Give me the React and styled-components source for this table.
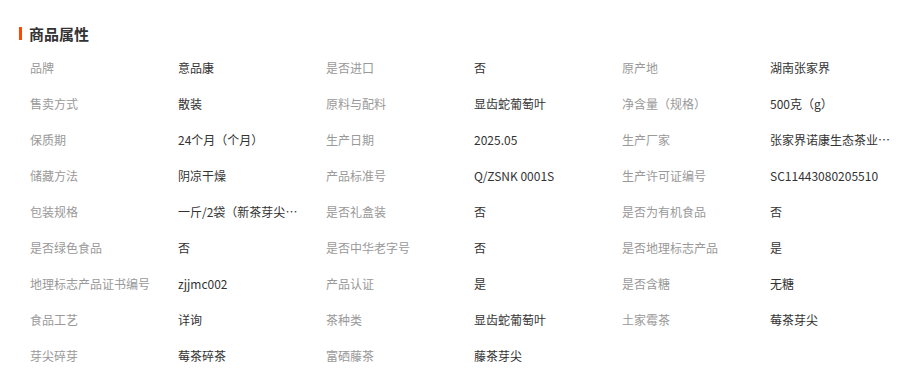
import React from "react";
import styled, { createGlobalStyle } from "styled-components";

const GlobalStyle = createGlobalStyle`
  body {
    margin: 0;
    background: #fff;
    font-family: "Noto Sans CJK SC", "Liberation Sans", sans-serif;
  }
`;

const Wrapper = styled.div`
  padding: 22px 0 0 19px;
`;

const Title = styled.div`
  display: flex;
  align-items: center;
  gap: 7px;
  height: 22px;
  font-size: 15px;
  font-weight: bold;
  color: #333;
  margin-bottom: 5px;
`;

const Bar = styled.span`
  width: 3px;
  height: 13px;
  background: #ff4800;
`;

const Grid = styled.div`
  display: grid;
  grid-template-columns: repeat(3, 296px);
  margin-left: 1px;
`;

const Item = styled.div`
  display: flex;
  align-items: center;
  height: 36px;
  padding-left: 10px;
  font-size: 12px;
`;

const Label = styled.span`
  width: 148px;
  flex-shrink: 0;
  color: #999;
  white-space: nowrap;
`;

const Value = styled.span`
  max-width: 121px;
  color: #333;
  white-space: nowrap;
  overflow: hidden;
  text-overflow: ellipsis;
`;

const attrs = [
  ["品牌", "意品康"],
  ["是否进口", "否"],
  ["原产地", "湖南张家界"],
  ["售卖方式", "散装"],
  ["原料与配料", "显齿蛇葡萄叶"],
  ["净含量（规格）", "500克（g）"],
  ["保质期", "24个月（个月）"],
  ["生产日期", "2025.05"],
  ["生产厂家", "张家界诺康生态茶业有限公司"],
  ["储藏方法", "阴凉干燥"],
  ["产品标准号", "Q/ZSNK 0001S"],
  ["生产许可证编号", "SC11443080205510"],
  ["包装规格", "一斤/2袋（新茶芽尖特级）"],
  ["是否礼盒装", "否"],
  ["是否为有机食品", "否"],
  ["是否绿色食品", "否"],
  ["是否中华老字号", "否"],
  ["是否地理标志产品", "是"],
  ["地理标志产品证书编号", "zjjmc002"],
  ["产品认证", "是"],
  ["是否含糖", "无糖"],
  ["食品工艺", "详询"],
  ["茶种类", "显齿蛇葡萄叶"],
  ["土家霉茶", "莓茶芽尖"],
  ["芽尖碎芽", "莓茶碎茶"],
  ["富硒藤茶", "藤茶芽尖"],
];

const App = () => {
  return (
    <Wrapper>
      <GlobalStyle />
      <Title>
        <Bar />
        商品属性
      </Title>
      <Grid>
        {attrs.map(([k, v]) => (
          <Item key={k}>
            <Label>{k}</Label>
            <Value>{v}</Value>
          </Item>
        ))}
      </Grid>
    </Wrapper>
  );
};

export default App;
